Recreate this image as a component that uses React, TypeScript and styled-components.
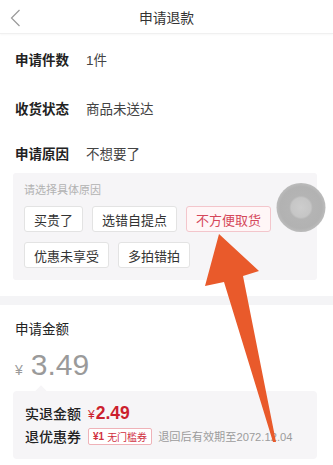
import React from "react";
import styled, { createGlobalStyle } from "styled-components";

const Global = createGlobalStyle`
  html, body { margin: 0; padding: 0; background: #fff; }
  body {
    width: 333px; height: 465px; overflow: hidden;
    font-family: "Liberation Sans", "Noto Sans CJK SC", sans-serif;
    color: #333;
  }
  * { box-sizing: border-box; }
`;

const Page = styled.div`
  position: relative;
  width: 333px;
  height: 465px;
  overflow: hidden;
  background: #fff;
`;

const Header = styled.div`
  height: 34px;
  display: flex;
  align-items: center;
  justify-content: center;
  position: relative;
  border-bottom: 1px solid #f0f0f0;
  box-shadow: 0 1px 2px rgba(0,0,0,0.03);
`;

const Back = styled.svg`
  position: absolute;
  left: 9px;
  top: 8px;
`;

const Title = styled.div`
  font-size: 13.8px;
  color: #333;
`;

const Row = styled.div<{ $h?: number }>`
  height: 49px;
  display: flex;
  align-items: center;
  padding-left: 15px;
  font-size: 13.5px;
`;

const ReasonRow = styled(Row)`
  height: auto;
  padding-top: 13px;
  padding-bottom: 8px;
  line-height: 20px;
`;

const Label = styled.span`
  width: 71px;
  font-weight: 700;
  color: #222;
`;

const Value = styled.span`
  color: #444;
`;

const ReasonBox = styled.div`
  margin: 0 16px 0 13px;
  background: #f6f5f7;
  border-radius: 3px;
  padding: 10px 11px 12px;
`;

const Hint = styled.div`
  font-size: 11px;
  line-height: 14px;
  color: #b2b2b2;
  margin-bottom: 9px;
`;

const Chips = styled.div`
  display: flex;
  flex-wrap: wrap;
  gap: 10px 9px;
  width: 250px;
`;

const Chip = styled.div<{ $on?: boolean }>`
  height: 26px;
  padding: 0 9px;
  display: flex;
  align-items: center;
  font-size: 13px;
  border-radius: 3px;
  border: 1px solid ${(p) => (p.$on ? "#f3c6cc" : "#e3e3e3")};
  background: ${(p) => (p.$on ? "#fff6f7" : "#fff")};
  color: ${(p) => (p.$on ? "#d5475a" : "#333")};
`;

const Band = styled.div`
  height: 9px;
  background: #f4f4f6;
  margin-top: 16px;
`;

const AmountSection = styled.div`
  padding: 15px 0 0;
`;

const AmountLabel = styled.div`
  padding-left: 15px;
  font-size: 13.5px;
  line-height: 20px;
  color: #222;
`;

const Big = styled.div`
  margin-top: 7px;
  padding-left: 15px;
  height: 36px;
  line-height: 36px;
  color: #9a9a9a;
  display: flex;
  align-items: baseline;
`;

const Yen = styled.span`
  font-size: 14px;
  margin-right: 8px;
`;

const BigNum = styled.span`
  font-size: 30px;
`;

const RefundBox = styled.div`
  position: relative;
  margin: 8px 16px 0 13px;
  background: #f6f5f7;
  border-radius: 4px;
  padding: 12px 12px 13px;
  display: flex;
  flex-direction: column;
  gap: 3px;
  &::before {
    content: "";
    position: absolute;
    top: -4px;
    left: 24px;
    width: 8px;
    height: 8px;
    background: #f6f5f7;
    transform: rotate(45deg);
  }
`;

const Line = styled.div`
  display: flex;
  align-items: center;
  height: 20px;
  font-size: 14px;
`;

const LineLabel = styled.span`
  width: 63px;
  color: #222;
  font-weight: 500;
`;

const Red = styled.span`
  color: #cc1f2e;
  display: flex;
  align-items: baseline;
`;

const RedYen = styled.span`
  font-size: 12px;
  margin-right: 1px;
`;

const RedNum = styled.span`
  font-size: 17.5px;
  font-weight: 700;
`;

const Tag = styled.span`
  height: 17px;
  padding: 0 4px;
  border: 1px solid #efb2b8;
  border-radius: 2px;
  background: #fff;
  color: #d0303f;
  font-size: 10px;
  display: flex;
  align-items: center;
  gap: 3px;
  margin-right: 6px;
`;

const TagYen = styled.b`
  font-weight: 700;
`;

const Note = styled.span`
  font-size: 11.2px;
  color: #9c9c9c;
  white-space: nowrap;
`;

const Overlay = styled.svg`
  position: absolute;
  left: 0;
  top: 0;
  pointer-events: none;
`;

export default function App() {
  return (
    <Page>
      <Global />
      <Header>
        <Back width="14" height="20" viewBox="0 0 14 20">
          <polyline points="10.5,2 2.5,10 10.5,18" fill="none" stroke="#9a9a9a" strokeWidth="1.2" />
        </Back>
        <Title>申请退款</Title>
      </Header>
      <Row>
        <Label>申请件数</Label>
        <Value>1件</Value>
      </Row>
      <Row>
        <Label>收货状态</Label>
        <Value>商品未送达</Value>
      </Row>
      <ReasonRow>
        <Label>申请原因</Label>
        <Value>不想要了</Value>
      </ReasonRow>
      <ReasonBox>
        <Hint>请选择具体原因</Hint>
        <Chips>
          <Chip>买贵了</Chip>
          <Chip>选错自提点</Chip>
          <Chip $on>不方便取货</Chip>
          <Chip>优惠未享受</Chip>
          <Chip>多拍错拍</Chip>
        </Chips>
      </ReasonBox>
      <Band />
      <AmountSection>
        <AmountLabel>申请金额</AmountLabel>
        <Big>
          <Yen>¥</Yen>
          <BigNum>3.49</BigNum>
        </Big>
        <RefundBox>
          <Line>
            <LineLabel>实退金额</LineLabel>
            <Red>
              <RedYen>¥</RedYen>
              <RedNum>2.49</RedNum>
            </Red>
          </Line>
          <Line>
            <LineLabel>退优惠券</LineLabel>
            <Tag>
              <TagYen>¥1</TagYen>无门槛券
            </Tag>
            <Note>退回后有效期至2072.12.04</Note>
          </Line>
        </RefundBox>
      </AmountSection>
      <Overlay width="333" height="465" viewBox="0 0 333 465">
        <defs>
          <radialGradient id="ball" cx="50%" cy="50%" r="50%">
            <stop offset="0%" stopColor="#cdcdcd" />
            <stop offset="40%" stopColor="#c6c6c6" />
            <stop offset="48%" stopColor="#b4b4b4" />
            <stop offset="85%" stopColor="#b2b2b2" />
            <stop offset="100%" stopColor="#bcbcbc" />
          </radialGradient>
        </defs>
        <circle cx="301" cy="207.5" r="24.5" fill="url(#ball)" />
        <polygon
          points="219,234 259,271 243,276 276,442 273,442 224,282 205,286"
          fill="#e95a2b"
        />
      </Overlay>
    </Page>
  );
}
